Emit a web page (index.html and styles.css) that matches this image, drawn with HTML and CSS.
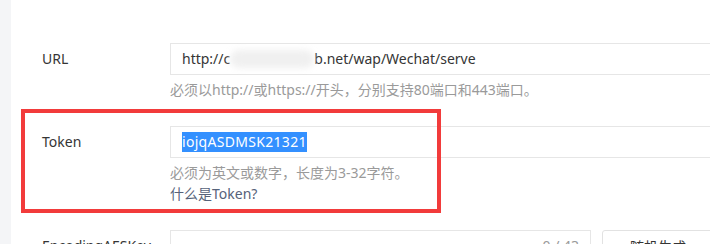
FILE: index.html
```html
<!DOCTYPE html>
<html lang="zh-CN">
<head>
<meta charset="utf-8">
<title>服务器配置</title>
<link rel="stylesheet" href="styles.css">
</head>
<body>
<div class="page">
  <aside class="side"></aside>
  <main class="main">
    <div class="form">
      <div class="row">
        <label class="label">URL</label>
        <div class="field">
          <div class="input wide"><span>http://c</span><span class="blur"></span><span>b.net/wap/Wechat/serve</span></div>
          <p class="help">必须以http://或https://开头，分别支持80端口和443端口。</p>
        </div>
      </div>
      <div class="row marked">
        <label class="label">Token</label>
        <div class="field">
          <div class="input wide"><span class="selected">iojqASDMSK21321</span></div>
          <p class="help">必须为英文或数字，长度为3-32字符。</p>
          <p class="help link">什么是Token?</p>
        </div>
        <div class="annot"></div>
      </div>
      <div class="row">
        <label class="label">EncodingAESKey</label>
        <div class="field inline">
          <div class="input short"><span class="count">0 / 43</span></div>
          <button class="btn">随机生成</button>
        </div>
      </div>
    </div>
  </main>
</div>
</body>
</html>
```
FILE: styles.css
```css
html, body {
  margin: 0;
  padding: 0;
  background: #ffffff;
  overflow: hidden;
}
body {
  font-family: "Noto Sans", "Noto Sans CJK SC", sans-serif;
  color: #353535;
}
.page {
  display: flex;
  width: 710px;
  height: 244px;
  overflow: hidden;
}
.side {
  flex: 0 0 11px;
  background: #f4f5f7;
}
.main {
  flex: 1;
  min-width: 0;
  padding: 43px 0 0 31px;
}
.form {
  display: flex;
  flex-direction: column;
  gap: 26px;
}
.row {
  position: relative;
  display: grid;
  grid-template-columns: 128px 1fr;
}
.label {
  font-size: 14px;
  line-height: 32px;
  color: #353535;
  white-space: nowrap;
}
.field {
  min-width: 0;
}
.field.inline {
  display: flex;
  gap: 11px;
}
.input {
  flex-shrink: 0;
  box-sizing: border-box;
  height: 32px;
  border: 1px solid #e6e6e6;
  padding: 0 11px;
  font-size: 14px;
  line-height: 30px;
  color: #353535;
  white-space: nowrap;
  display: flex;
  align-items: center;
}
.input.wide {
  width: 580px;
}
.input.short {
  width: 421px;
  justify-content: flex-end;
}
.blur {
  display: inline-block;
  width: 84px;
  height: 18px;
  background: #f0f0f0;
  border-radius: 9px;
  filter: blur(3px);
}
.selected {
  background: #3390ff;
  color: #ffffff;
  line-height: 20px;
  letter-spacing: 0.3px;
}
.count {
  color: #9a9a9a;
  font-size: 14px;
  margin-right: 0;
}
.help {
  margin: 4px 0 0;
  font-size: 14px;
  line-height: 21px;
  color: #9a9a9a;
  white-space: nowrap;
}
.help + .help {
  margin-top: 0;
}
.help.link {
  color: #56627a;
}
.btn {
  flex-shrink: 0;
  box-sizing: border-box;
  height: 32px;
  width: 120px;
  border: 1px solid #e2e2e2;
  border-radius: 3px;
  background: #ffffff;
  font-family: inherit;
  font-size: 14px;
  color: #353535;
  padding: 0 0 0 27px;
  text-align: left;
}
.annot {
  position: absolute;
  left: -21px;
  top: -17px;
  width: 420px;
  height: 104px;
  box-sizing: border-box;
  border: 4px solid #f23b3b;
  pointer-events: none;
}
```
